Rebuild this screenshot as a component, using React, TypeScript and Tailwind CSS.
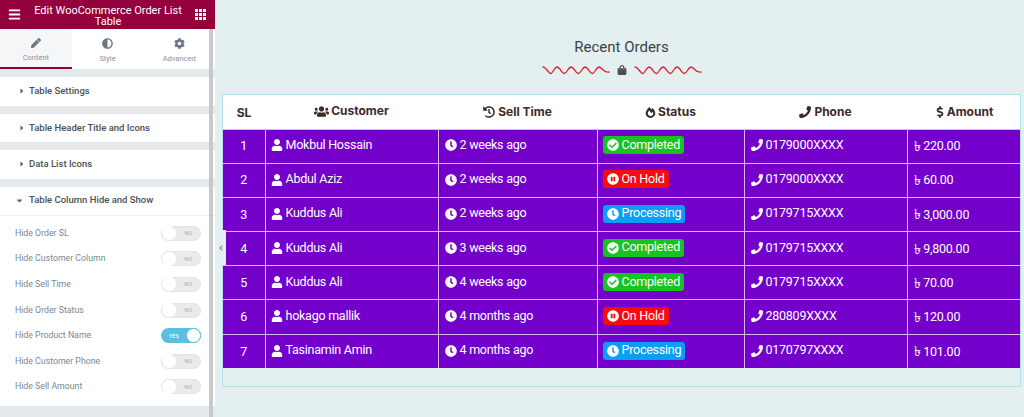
import { FaBars, FaPen, FaAdjust, FaCog, FaCaretRight, FaCaretDown, FaChevronLeft, FaShoppingBag, FaUsers, FaHistory, FaFireAlt, FaPhone, FaDollarSign, FaUser, FaClock, FaCheckCircle, FaPauseCircle } from 'react-icons/fa';

const rows = [
  { sl: 1, name: 'Mokbul Hossain', time: '2 weeks ago', status: 'Completed', phone: '0179000XXXX', amount: '220.00' },
  { sl: 2, name: 'Abdul Aziz', time: '2 weeks ago', status: 'On Hold', phone: '0179000XXXX', amount: '60.00' },
  { sl: 3, name: 'Kuddus Ali', time: '2 weeks ago', status: 'Processing', phone: '0179715XXXX', amount: '3,000.00' },
  { sl: 4, name: 'Kuddus Ali', time: '3 weeks ago', status: 'Completed', phone: '0179715XXXX', amount: '9,800.00' },
  { sl: 5, name: 'Kuddus Ali', time: '4 weeks ago', status: 'Completed', phone: '0179715XXXX', amount: '70.00' },
  { sl: 6, name: 'hokago mallik', time: '4 months ago', status: 'On Hold', phone: '280809XXXX', amount: '120.00' },
  { sl: 7, name: 'Tasinamin Amin', time: '4 months ago', status: 'Processing', phone: '0170797XXXX', amount: '101.00' },
];

const toggles = [
  { label: 'Hide Order SL', on: false },
  { label: 'Hide Customer Column', on: false },
  { label: 'Hide Sell Time', on: false },
  { label: 'Hide Order Status', on: false },
  { label: 'Hide Product Name', on: true },
  { label: 'Hide Customer Phone', on: false },
  { label: 'Hide Sell Amount', on: false },
];

function Wave() {
  return (
    <svg width="68" height="10" viewBox="0 0 68 10" fill="none" stroke="#d9232e" strokeWidth="1.3" strokeLinecap="round">
      <path d="M1 2 C4 2 7 9 9 8.5 C11 8 12 2.5 15 2 C18 2 20 9 22.5 8.5 C25 8 26 2.5 29 2 C32 2 34 9 36.5 8.5 C39 8 40 2.5 43 2 C46 2 48 9 50.5 8.5 C53 8 54 2.5 57 2 C60 2 61 8 67 7" />
    </svg>
  );
}

function Status({ status }: { status: string }) {
  if (status === 'Completed') {
    return (
      <span className="inline-flex items-center gap-[3px] h-[18px] px-[4px] rounded-[3px] bg-[#17c31f]">
        <FaCheckCircle className="text-[12px]" /> Completed
      </span>
    );
  }
  if (status === 'On Hold') {
    return (
      <span className="inline-flex items-center gap-[3px] h-[18px] px-[4px] rounded-[3px] bg-[#f80a0f]">
        <FaPauseCircle className="text-[12px]" /> On Hold
      </span>
    );
  }
  return (
    <span className="inline-flex items-center gap-[3px] h-[18px] px-[4px] rounded-[3px] bg-[#0d9df5]">
      <FaClock className="text-[12px]" /> Processing
    </span>
  );
}

function Section({ title }: { title: string }) {
  return (
    <div className="h-[28.5px] mb-[8px] bg-white flex items-center pl-[18px] text-[9.5px] font-medium text-[#495157]">
      <FaCaretRight className="text-[8px] text-[#556068] mr-[3px]" />
      {title}
    </div>
  );
}

export default function App() {
  return (
    <div className="w-[1024px] h-[417px] flex overflow-hidden bg-[#e4eff0] font-['Roboto',sans-serif]">
      {/* Sidebar */}
      <aside className="w-[215px] shrink-0 flex flex-col bg-[#e6e9ec] relative">
        <div className="h-[29px] bg-[#93003c] text-white flex items-center justify-between pl-[8px] pr-[9px]">
          <FaBars className="text-[13px]" />
          <div className="w-[160px] pt-[2px] text-center text-[11px] leading-[11px]">Edit WooCommerce Order List Table</div>
          <svg width="11" height="11" viewBox="0 0 11 11" fill="white">
            <rect x="0" y="0" width="3" height="3" /><rect x="4" y="0" width="3" height="3" /><rect x="8" y="0" width="3" height="3" />
            <rect x="0" y="4" width="3" height="3" /><rect x="4" y="4" width="3" height="3" /><rect x="8" y="4" width="3" height="3" />
            <rect x="0" y="8" width="3" height="3" /><rect x="4" y="8" width="3" height="3" /><rect x="8" y="8" width="3" height="3" />
          </svg>
        </div>
        <div className="h-[40px] bg-white flex text-[7.5px] text-[#8b949b]">
          <div className="flex-1 flex flex-col items-center pt-[9px] gap-[4px] border-b-2 border-[#93003c] bg-[#f5f6f7]">
            <FaPen className="text-[10px] text-[#6d7882]" />
            Content
          </div>
          <div className="flex-1 flex flex-col items-center pt-[9px] gap-[4px]">
            <FaAdjust className="text-[11px] text-[#6d7882]" />
            Style
          </div>
          <div className="flex-1 flex flex-col items-center pt-[9px] gap-[4px]">
            <FaCog className="text-[11px] text-[#6d7882]" />
            Advanced
          </div>
        </div>
        <div className="pt-[8px]">
          <Section title="Table Settings" />
          <Section title="Table Header Title and Icons" />
          <Section title="Data List Icons" />
        </div>
        <div className="bg-white h-[219px]">
          <div className="h-[29px] flex items-center pl-[15px] text-[9.5px] font-medium text-[#495157] border-b border-[#eceef0]">
            <FaCaretDown className="text-[9px] text-[#556068] mr-[5px]" />
            Table Column Hide and Show
          </div>
          <div className="pt-[5px] flex flex-col">
            {toggles.map((t) => (
              <div key={t.label} className="h-[25.6px] flex items-center justify-between pl-[15px] pr-[14px] text-[8.75px] text-[#7d8790]">
                {t.label}
                {t.on ? (
                  <div className="w-[40px] h-[15px] rounded-full bg-[#5bc0de] flex items-center justify-between pl-[8px] text-[5.5px] text-white">
                    YES
                    <span className="w-[15px] h-[15px] rounded-full bg-white border border-[#5bc0de]" />
                  </div>
                ) : (
                  <div className="w-[40px] h-[15px] rounded-full bg-[#e9ebed] border border-[#e2e4e6] flex items-center justify-between pr-[8px] text-[5.5px] text-[#aab0b6]">
                    <span className="w-[14px] h-[14px] rounded-full bg-white" />
                    NO
                  </div>
                )}
              </div>
            ))}
          </div>
        </div>
        {/* Scrollbar */}
        <div className="absolute left-[209px] top-[29px] bottom-0 w-[4px] bg-[#c8c9ca]" />
        {/* Collapse handle */}
        <div className="absolute left-[215px] top-[230px] w-[11px] h-[35px] bg-[#e4eff0] flex items-center justify-center z-10">
          <FaChevronLeft className="text-[6px] text-[#6d7882]" />
        </div>
      </aside>

      {/* Main */}
      <main className="flex-1 flex flex-col pl-[7px] pr-[3px] pt-[38px]">
        <h2 className="text-center text-[15px] leading-[18px] text-[#3c4249]">Recent Orders</h2>
        <div className="flex items-center justify-center gap-[7px] mt-[9px] h-[10px]">
          <Wave />
          <FaShoppingBag className="text-[10px] text-[#4a4f55]" />
          <Wave />
        </div>
        <div className="mt-[19px] h-[293px] border border-[#b5dfee]">
          <table className="w-full table-fixed border-collapse text-[12.5px] tracking-[-0.25px] text-white">
            <colgroup>
              <col className="w-[42px]" />
              <col className="w-[173px]" />
              <col className="w-[159px]" />
              <col className="w-[147px]" />
              <col className="w-[163px]" />
              <col />
            </colgroup>
            <thead>
              <tr className="h-[34px] bg-white text-[#3d2a28] font-bold text-[12px] tracking-normal font-['Inter',sans-serif]">
                <th className="pt-[2px]">SL</th>
                <th className="pt-[2px]"><span className="inline-flex items-center gap-[2px]"><FaUsers className="text-[15px]" />Customer</span></th>
                <th className="pt-[2px]"><span className="inline-flex items-center gap-[3px]"><FaHistory className="text-[12px]" />Sell Time</span></th>
                <th className="pt-[2px]"><span className="inline-flex items-center gap-[2px]"><FaFireAlt className="text-[11px]" />Status</span></th>
                <th className="pt-[2px]"><span className="inline-flex items-center gap-[3px]"><FaPhone className="text-[12px]" />Phone</span></th>
                <th className="pt-[2px]"><span className="inline-flex items-center gap-[1px]"><FaDollarSign className="text-[12px]" />Amount</span></th>
              </tr>
            </thead>
            <tbody>
              {rows.map((r) => (
                <tr key={r.sl} className="h-[34.2px] bg-[#7400cc]">
                  <td className="pt-[1px] text-center border-t border-[#d6b8ee]">{r.sl}</td>
                  <td className="pt-[1px] pl-[5px] border-t border-l border-[#d6b8ee]">
                    <span className="inline-flex items-center gap-[3px]"><FaUser className="text-[12px]" />{r.name}</span>
                  </td>
                  <td className="pt-[1px] pl-[6px] border-t border-l border-[#d6b8ee]">
                    <span className="inline-flex items-center gap-[3px]"><FaClock className="text-[12px]" />{r.time}</span>
                  </td>
                  <td className="pt-[1px] pl-[5px] border-t border-l border-[#d6b8ee]"><Status status={r.status} /></td>
                  <td className="pt-[1px] pl-[6px] border-t border-l border-[#d6b8ee]">
                    <span className="inline-flex items-center gap-[3px]"><FaPhone className="text-[12px]" />{r.phone}</span>
                  </td>
                  <td className="pt-[1px] pl-[6px] border-t border-l border-[#d6b8ee]">
                    <span className="inline-flex items-center gap-[3px]"><span className="text-[14px]">৳</span>{r.amount}</span>
                  </td>
                </tr>
              ))}
            </tbody>
          </table>
        </div>
      </main>
    </div>
  );
}
